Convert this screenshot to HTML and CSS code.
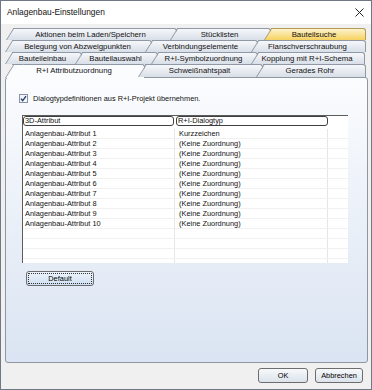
FILE: index.html
```html
<!DOCTYPE html>
<html lang="de">
<head>
  <meta charset="UTF-8" />
  <title>Anlagenbau-Einstellungen</title>
  <link rel="stylesheet" href="styles.css">
</head>
<body>
  <div class="window">
    <div class="titlebar">
      <span class="title">Anlagenbau-Einstellungen</span>
      <svg class="close" width="9" height="9" viewBox="0 0 9 9">
        <path d="M0.5 0.5L8.5 8.5M8.5 0.5L0.5 8.5" stroke="#222" stroke-width="1" fill="none"/>
      </svg>
    </div>

    <div class="client">
      <div class="tabs">
        <div class="tab-row row1">
          <div class="tab"><span>Aktionen beim Laden/Speichern</span></div>
          <div class="tab"><span>Stücklisten</span></div>
          <div class="tab hot"><span>Bauteilsuche</span></div>
        </div>
        <div class="tab-row row2">
          <div class="tab"><span>Belegung von Abzweigpunkten</span></div>
          <div class="tab"><span>Verbindungselemente</span></div>
          <div class="tab"><span>Flanschverschraubung</span></div>
        </div>
        <div class="tab-row row3">
          <div class="tab"><span>Bauteileinbau</span></div>
          <div class="tab"><span>Bauteilauswahl</span></div>
          <div class="tab"><span>R+I-Symbolzuordnung</span></div>
          <div class="tab"><span>Kopplung mit R+I-Schema</span></div>
        </div>
        <div class="tab-row row4">
          <div class="tab selected"><span>R+I Attributzuordnung</span></div>
          <div class="tab"><span>Schweißnahtspalt</span></div>
          <div class="tab"><span>Gerades Rohr</span></div>
        </div>
      </div>

      <div class="panel">
        <label class="check">
          <svg width="9" height="9" viewBox="0 0 9 9">
            <rect x="0.5" y="0.5" width="8" height="8" fill="#f3f5f8" stroke="#8593a5"/>
            <path d="M2 4.6L3.7 6.6L7 2.2" fill="none" stroke="#1f3a70" stroke-width="1.3"/>
          </svg>
          <span>Dialogtypdefinitionen aus R+I-Projekt übernehmen.</span>
        </label>

        <div class="list">
          <div class="list-head">
            <div class="col-head c1">3D-Attribut</div>
            <div class="col-head c2">R+I-Dialogtyp</div>
          </div>
          <div class="list-row"><div class="cell c1">Anlagenbau-Attribut 1</div><div class="cell c2">Kurzzeichen</div><div class="cell c3"></div></div>
          <div class="list-row"><div class="cell c1">Anlagenbau-Attribut 2</div><div class="cell c2">(Keine Zuordnung)</div><div class="cell c3"></div></div>
          <div class="list-row"><div class="cell c1">Anlagenbau-Attribut 3</div><div class="cell c2">(Keine Zuordnung)</div><div class="cell c3"></div></div>
          <div class="list-row"><div class="cell c1">Anlagenbau-Attribut 4</div><div class="cell c2">(Keine Zuordnung)</div><div class="cell c3"></div></div>
          <div class="list-row"><div class="cell c1">Anlagenbau-Attribut 5</div><div class="cell c2">(Keine Zuordnung)</div><div class="cell c3"></div></div>
          <div class="list-row"><div class="cell c1">Anlagenbau-Attribut 6</div><div class="cell c2">(Keine Zuordnung)</div><div class="cell c3"></div></div>
          <div class="list-row"><div class="cell c1">Anlagenbau-Attribut 7</div><div class="cell c2">(Keine Zuordnung)</div><div class="cell c3"></div></div>
          <div class="list-row"><div class="cell c1">Anlagenbau-Attribut 8</div><div class="cell c2">(Keine Zuordnung)</div><div class="cell c3"></div></div>
          <div class="list-row"><div class="cell c1">Anlagenbau-Attribut 9</div><div class="cell c2">(Keine Zuordnung)</div><div class="cell c3"></div></div>
          <div class="list-row"><div class="cell c1">Anlagenbau-Attribut 10</div><div class="cell c2">(Keine Zuordnung)</div><div class="cell c3"></div></div>
          <div class="list-row"><div class="cell c1"></div><div class="cell c2"></div><div class="cell c3"></div></div>
          <div class="list-row"><div class="cell c1"></div><div class="cell c2"></div><div class="cell c3"></div></div>
          <div class="list-row"><div class="cell c1"></div><div class="cell c2"></div><div class="cell c3"></div></div>
          <div class="list-row"><div class="cell c1"></div><div class="cell c2"></div><div class="cell c3"></div></div>
        </div>

        <button class="btn default">Default</button>
      </div>

      <div class="footer">
        <button class="btn ok">OK</button>
        <button class="btn cancel">Abbrechen</button>
      </div>
    </div>
  </div>
</body>
</html>
```

FILE: styles.css
```css
* {
  margin: 0;
  padding: 0;
  box-sizing: border-box;
}

body {
  font-family: "Liberation Sans", Arial, sans-serif;
  font-size: 7.4px;
  color: #111;
  background: #fff;
}

.window {
  width: 372px;
  height: 390px;
  border: 1px solid #6f7884;
  display: flex;
  flex-direction: column;
  background: #fff;
}

/* title bar */
.titlebar {
  height: 23px;
  display: flex;
  align-items: center;
  justify-content: space-between;
  padding: 0 7px 1px 6px;
  background: #fff;
}

.title {
  font-size: 8.4px;
}

.client {
  flex: 1;
  display: flex;
  flex-direction: column;
  background: #f0f0f0;
  padding: 4px 3px 0 4px;
}

/* tabs */
.tab-row {
  display: flex;
  height: 12px;
}

.row4 {
  height: 13px;
}

.tab {
  position: relative;
  flex: none;
  height: 100%;
  padding-right: 8px;
  border-top: 1px solid #8f98a4;
  border-right: 1px solid #8f98a4;
  border-top-right-radius: 3px;
  background: linear-gradient(#f5f7fa, #d9dfe8);
  font-size: 7.8px;
  text-align: center;
  line-height: 11px;
  white-space: nowrap;
}

.tab::before {
  content: "";
  position: absolute;
  left: -7px;
  top: -1px;
  bottom: 0;
  width: 9px;
  background: inherit;
  border-top: 1px solid #8f98a4;
  border-left: 1px solid #8f98a4;
  transform: skewX(-32deg);
  transform-origin: 0 100%;
}

.tab span {
  position: relative;
}

.tab.hot,
.tab.hot::before {
  background: linear-gradient(#fdf3cc, #f6d25e);
  border-color: #b39a58;
}

.tab.selected {
  height: 14px;
  background: #fbfcfe;
  line-height: 12px;
}

.row1 .tab:nth-child(1) { width: 164px; margin-left: 8px; }
.row1 .tab:nth-child(2) { width: 94px; }
.row1 .tab:nth-child(3) { width: 95px; }

.row2 .tab:nth-child(1) { width: 140px; margin-left: 7px; }
.row2 .tab:nth-child(2) { width: 106px; }
.row2 .tab:nth-child(3) { width: 108px; }

.row3 .tab:nth-child(1) { width: 70px; margin-left: 7px; }
.row3 .tab:nth-child(2) { width: 76px; }
.row3 .tab:nth-child(3) { width: 100px; }
.row3 .tab:nth-child(4) { width: 107px; }

.row4 .tab:nth-child(1) { width: 133px; margin-left: 7px; }
.row4 .tab:nth-child(2) { width: 118px; }
.row4 .tab:nth-child(3) { width: 103px; }

/* page */
.panel {
  flex: none;
  height: 286px;
  border: 1px solid #8e969f;
  border-radius: 3px;
  background: linear-gradient(#fbfcfe, #dae4f2);
  padding: 15px 0 0 13px;
}

.check {
  display: flex;
  align-items: center;
  gap: 5px;
  height: 10px;
}

.list {
  width: 326px;
  height: 148px;
  margin: 12px 0 0 3px;
  background: #fff;
  border-top: 1px solid #5c5c5c;
  border-left: 1px solid #5c5c5c;
  overflow: hidden;
}

.list-head {
  display: flex;
  gap: 2px;
  height: 13px;
}

.col-head {
  height: 10px;
  line-height: 8px;
  padding-left: 1px;
  border: 1px solid #3f3f3f;
  border-radius: 3px;
  background: #fff;
}

.col-head.c1 { width: 151px; }
.col-head.c2 { width: 152px; }

.list-row {
  display: flex;
  height: 10px;
  line-height: 9px;
  border-bottom: 1px solid #f1f1f1;
}

.cell {
  height: 100%;
  white-space: nowrap;
}

.cell.c1 {
  width: 152px;
  padding-left: 2px;
  border-right: 1px solid #e6e6e6;
}

.cell.c2 {
  width: 153px;
  padding-left: 4px;
  border-right: 1px solid #e6e6e6;
}

.cell.c3 {
  flex: 1;
}

/* buttons */
.btn {
  height: 15px;
  font-family: inherit;
  font-size: 7.4px;
  color: #000;
  border: 1px solid #6d6d6d;
  border-radius: 3px;
  background: linear-gradient(#f7f9fb, #dce3ec);
}

.default {
  display: block;
  width: 68px;
  margin: 8px 0 0 7px;
  background: linear-gradient(#eef4fb, #cfdff2);
  outline: 1px dotted #333;
  outline-offset: -3px;
}

.footer {
  flex: 1;
  display: flex;
  justify-content: flex-end;
  gap: 7px;
  padding: 5px 5px 0 0;
}

.ok { width: 50px; }
.cancel { width: 48px; }
```
